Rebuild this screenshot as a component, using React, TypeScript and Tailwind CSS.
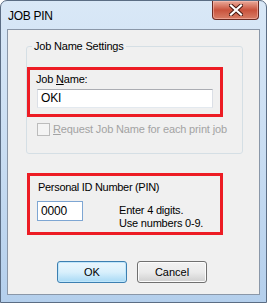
export default function App() {
  return (
    <div className="relative flex h-[303px] w-[267px] flex-col overflow-hidden rounded-t-[7px] border border-[#5b6d84] bg-gradient-to-b from-[#d9e8f7] via-[#c9ddf2] to-[#b4cfec] font-['Liberation_Sans',Arial,sans-serif] text-[11px] leading-[13px] text-black">
      {/* title bar */}
      <div className="flex h-[28px] items-start justify-between">
        <div className="pl-[7px] pt-[8px] text-[12px] leading-[14px] tracking-[-0.3px] text-black">JOB PIN</div>
        <div className="mr-[7px] flex h-[19px] w-[47px] items-center justify-center rounded-b-[4px] border border-t-0 border-[#6b2a22] bg-gradient-to-b from-[#e9a99a] via-[#c9523c] to-[#d77d66] shadow-[inset_0_0_0_1px_rgba(255,200,190,0.5)]">
          <svg width="14" height="12" viewBox="0 0 14 12">
            <path d="M2 1.5 L12 10.5 M12 1.5 L2 10.5" stroke="#4a1a12" strokeWidth="4.2" strokeLinecap="square" />
            <path d="M2 1.5 L12 10.5 M12 1.5 L2 10.5" stroke="#ffffff" strokeWidth="2.2" strokeLinecap="square" />
          </svg>
        </div>
      </div>

      {/* client area */}
      <div className="ml-[6px] flex h-[266px] w-[253px] flex-col border border-[#8a97a8] bg-[#f0f0f0]">
        <fieldset className="ml-[18px] mt-[10px] h-[114px] w-[217px] rounded-[3px] border border-[#d5dfe5]">
          <legend className="ml-[5px] px-[2px] leading-[13px] tracking-[-0.2px]">Job Name Settings</legend>
          <div className="mt-[14px] flex h-[50px] w-[196px] flex-col border-[3px] border-[#ed1c24]">
            <div className="ml-[6px] mt-[3px] tracking-[-0.2px]">
              Job <span className="underline">N</span>ame:
            </div>
            <div className="ml-[7px] mt-[3px] flex h-[19px] w-[176px] items-center border border-[#abadb3] border-b-[#e3e9ef] border-x-[#dbdfe6] bg-white pl-[3px] text-[12px] tracking-[-0.2px]">
              OKI
            </div>
          </div>
          <div className="ml-[10px] mt-[6px] flex items-center gap-[3px] text-[#a3a3a3]">
            <div className="h-[13px] w-[13px] border border-[#bcbcbc] bg-[#f4f4f4]" />
            <span className="tracking-[-0.15px]">
              <span className="underline">R</span>equest Job Name for each print job
            </span>
          </div>
        </fieldset>

        <div className="ml-[19px] mt-[19px] flex h-[62px] w-[196px] flex-col border-[3px] border-[#ed1c24]">
          <div className="ml-[8px] mt-[5px] tracking-[-0.3px]">Personal ID Number (PIN)</div>
          <div className="mt-[7px] flex items-start">
            <div className="ml-[7px] flex h-[20px] w-[46px] items-center border border-[#7ea6d3] bg-white pl-[3px] text-[12px] tracking-[-0.2px]">
              0000
            </div>
            <div className="ml-[36px] mt-[3px] flex flex-col tracking-[-0.2px]">
              <span>Enter 4 digits.</span>
              <span>Use numbers 0-9.</span>
            </div>
          </div>
        </div>

        <div className="ml-[49px] mt-[26px] flex gap-[10px]">
          <div className="flex h-[22px] w-[70px] items-center justify-center rounded-[3px] border border-[#3c7fb1] bg-gradient-to-b from-[#eaf6fd] via-[#d9f0fc] to-[#a7d9f5] shadow-[inset_0_0_0_1px_#bfe6fb]">
            OK
          </div>
          <div className="flex h-[22px] w-[70px] items-center justify-center rounded-[3px] border border-[#707070] bg-gradient-to-b from-[#f2f2f2] via-[#ebebeb] to-[#cfcfcf] shadow-[inset_0_0_0_1px_#fcfcfc]">
            Cancel
          </div>
        </div>
      </div>
    </div>
  );
}
